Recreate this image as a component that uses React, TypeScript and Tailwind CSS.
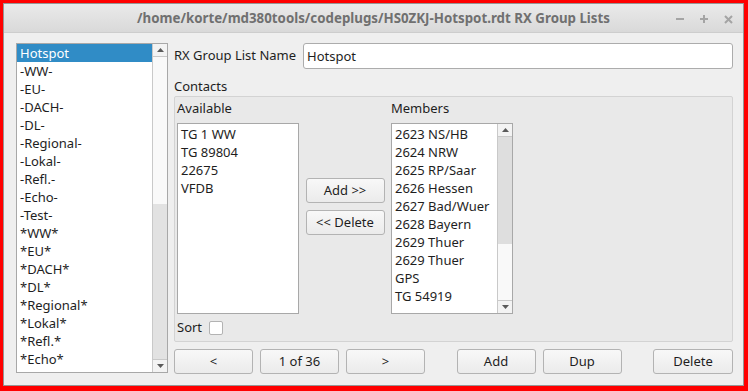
import React from 'react'

const groupLists = [
  'Hotspot', '-WW-', '-EU-', '-DACH-', '-DL-', '-Regional-', '-Lokal-', '-Refl.-', '-Echo-', '-Test-',
  '*WW*', '*EU*', '*DACH*', '*DL*', '*Regional*', '*Lokal*', '*Refl.*', '*Echo*', '*Test*',
]
const available = ['TG 1 WW', 'TG 89804', '22675', 'VFDB']
const members = [
  '2623 NS/HB', '2624 NRW', '2625 RP/Saar', '2626 Hessen', '2627 Bad/Wuer',
  '2628 Bayern', '2629 Thuer', '2629 Thuer', 'GPS', 'TG 54919',
]

const Arrow = ({ up }: { up?: boolean }) => (
  <svg width="7" height="4" viewBox="0 0 7 4">
    <path d={up ? 'M0 4 L3.5 0 L7 4 Z' : 'M0 0 L3.5 4 L7 0 Z'} fill="#5a5a5a" />
  </svg>
)

type BarProps = { thumb: number; track: number; thumbColor: string; trackColor: string }

const ScrollBar = ({ thumb, track, thumbColor, trackColor }: BarProps) => (
  <div className="w-[15px] flex flex-col border-l border-[#c9c9c9] shrink-0">
    <div className="h-[13px] flex items-center justify-center bg-[#f3f3f3] border-b border-[#c9c9c9]">
      <Arrow up />
    </div>
    <div style={{ height: thumb, background: thumbColor }} />
    <div style={{ height: track, background: trackColor }} />
    <div className="h-[13px] flex items-center justify-center bg-[#f3f3f3] border-t border-[#c9c9c9]">
      <Arrow />
    </div>
  </div>
)

const Button = ({ label, className = 'w-[79px]' }: { label: string; className?: string }) => (
  <button className={`${className} h-[25px] shrink-0 rounded-[3px] border border-[#b3b3b3] bg-gradient-to-b from-[#f8f8f8] to-[#ebebeb] text-[13px] text-[#1e1e1e] leading-none`}>
    {label}
  </button>
)

const Row = ({ text, selected }: { text: string; selected?: boolean }) => (
  <div className={`h-[18px] leading-[18px] px-[3px] whitespace-nowrap ${selected ? 'bg-[#308cc6] text-white' : 'text-[#1e1e1e]'}`}>
    {text}
  </div>
)

export default function App() {
  return (
    <div className="w-[748px] h-[391px] border-[#ff0000] border-t-[3px] border-l-[3px] border-r-[4px] border-b-[5px] font-['Noto_Sans',sans-serif] text-[13px]">
      <div className="h-full flex flex-col border border-[#969696]">
        {/* title bar */}
        <div className="h-[29px] shrink-0 grid grid-cols-[1fr_auto_1fr] items-center bg-gradient-to-b from-[#eaeaea] to-[#d9d9d9] border-b border-[#cdcdcd]">
          <div />
          <div className="font-bold text-[13.3px] text-[#707070] pt-[2px]">
            /home/korte/md380tools/codeplugs/HS0ZKJ-Hotspot.rdt RX Group Lists
          </div>
          <div className="flex justify-end items-center gap-[16px] pr-[10px] pt-[2px]">
            <svg width="8" height="8" viewBox="0 0 8 8">
              <path d="M0 4 H8" stroke="#a4a4a4" strokeWidth="2" />
            </svg>
            <svg width="8" height="8" viewBox="0 0 8 8">
              <path d="M0 4 H8 M4 0 V8" stroke="#a4a4a4" strokeWidth="2" />
            </svg>
            <svg width="9" height="9" viewBox="0 0 9 9">
              <path d="M1 1 L8 8 M8 1 L1 8" stroke="#a4a4a4" strokeWidth="2" />
            </svg>
          </div>
        </div>

        {/* body */}
        <div className="flex-1 flex gap-[6px] bg-[#efefef] pt-[10px] pl-[12px] pr-[10px] pb-[10px]">
          {/* left list */}
          <div className="w-[152px] h-[330px] flex bg-white border border-[#a8a8a8]">
            <div className="flex-1 overflow-hidden">
              {groupLists.map((g, i) => (
                <Row key={g} text={g} selected={i === 0} />
              ))}
            </div>
            <ScrollBar thumb={147} track={155} thumbColor="#f9f9f9" trackColor="#e2e2e2" />
          </div>

          {/* right column */}
          <div className="flex-1 flex flex-col">
            <div className="h-[26px] flex items-center">
              <span className="text-[#1e1e1e] whitespace-nowrap">RX Group List Name</span>
              <div className="flex-1 ml-[7px] h-[26px] rounded-[3px] border border-[#acacac] bg-white px-[3px] leading-[24px] text-[#1e1e1e]">
                Hotspot
              </div>
            </div>
            <div className="mt-[8px] h-[18px] leading-[18px] text-[#1e1e1e]">Contacts</div>
            <div className="mt-[1px] h-[246px] rounded-[2px] border border-[#d3d3d3] bg-[#e9e9e9] pl-[2px] pt-[2px] flex flex-col">
              <div className="flex">
                <div className="w-[122px] flex flex-col">
                  <div className="h-[18px] leading-[18px] text-[#1e1e1e]">Available</div>
                  <div className="mt-[6px] h-[191px] border border-[#a8a8a8] bg-white pt-px">
                    {available.map(a => (
                      <Row key={a} text={a} />
                    ))}
                  </div>
                </div>
                <div className="w-[92px] flex flex-col items-center pt-[79px] gap-[7px]">
                  <Button label="Add >>" />
                  <Button label="<< Delete" />
                </div>
                <div className="w-[122px] flex flex-col">
                  <div className="h-[18px] leading-[18px] text-[#1e1e1e]">Members</div>
                  <div className="mt-[6px] h-[191px] flex border border-[#a8a8a8] bg-white">
                    <div className="flex-1 pt-px overflow-hidden">
                      {members.map((m, i) => (
                        <Row key={m + i} text={m} />
                      ))}
                    </div>
                    <ScrollBar thumb={107} track={56} thumbColor="#dedede" trackColor="#f9f9f9" />
                  </div>
                </div>
              </div>
              <div className="mt-[5px] h-[18px] flex items-center gap-[7px]">
                <span className="text-[#1e1e1e]">Sort</span>
                <div className="w-[14px] h-[14px] rounded-[2px] border border-[#b3b3b3] bg-white" />
              </div>
            </div>
            <div className="mt-[7px] flex">
              <div className="flex gap-[7px]">
                <Button label="<" />
                <Button label="1 of 36" />
                <Button label=">" />
              </div>
              <div className="flex-1" />
              <div className="flex gap-[7px]">
                <Button label="Add" />
                <Button label="Dup" />
              </div>
              <div className="flex-1" />
              <Button label="Delete" className="w-[80px]" />
            </div>
          </div>
        </div>
      </div>
    </div>
  )
}
